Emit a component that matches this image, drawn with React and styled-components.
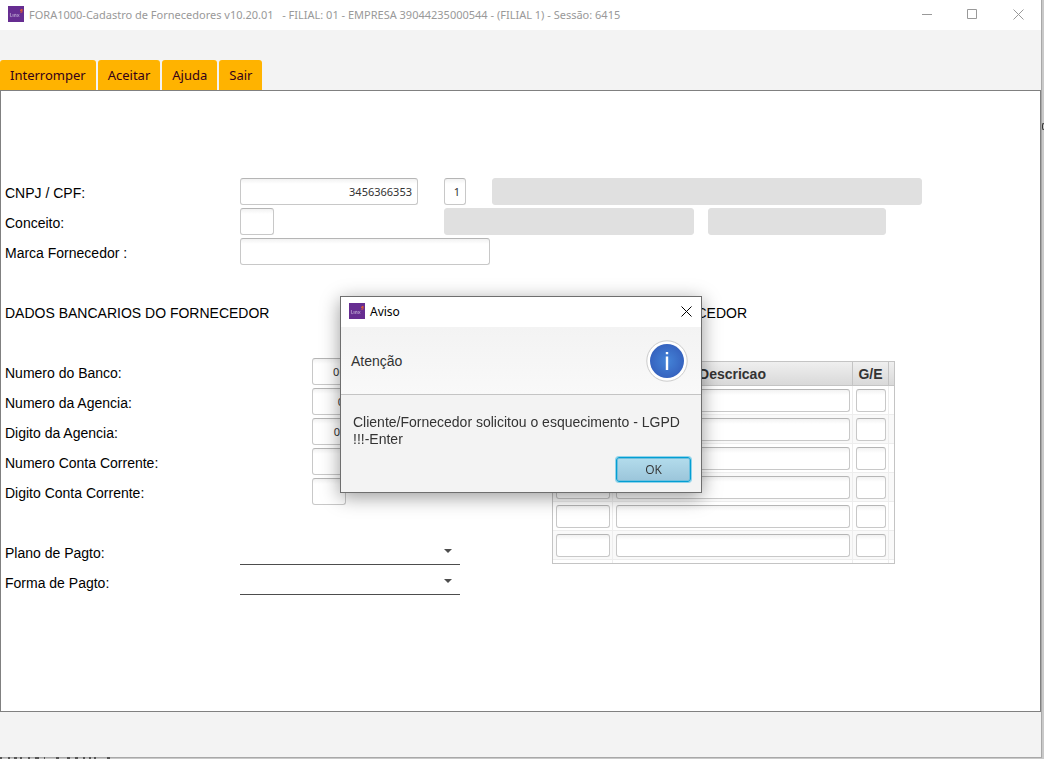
import React from 'react'
import styled, { createGlobalStyle } from 'styled-components'

const GlobalStyle = createGlobalStyle`
  * {
    box-sizing: border-box;
  }

  body {
    margin: 0;
    background: #c9c9c9;
    font-family: 'Liberation Sans', Arial, sans-serif;
    font-size: 14px;
    color: #000;
  }
`

const BUTTON_FONT = "'Open Sans', 'Segoe UI', sans-serif"
const SMALL_FONT = "'Noto Sans', 'Segoe UI', sans-serif"

const BANK_FIELDS = [
  { id: 'banco', label: 'Numero do Banco:', width: 46, value: '000' },
  { id: 'agencia', label: 'Numero da Agencia:', width: 38, value: '0' },
  { id: 'digito-agencia', label: 'Digito da Agencia:', width: 34, value: '0' },
  { id: 'conta', label: 'Numero Conta Corrente:', width: 106, value: '' },
  { id: 'digito-conta', label: 'Digito Conta Corrente:', width: 34, value: '' }
]

const PAYMENT_FIELDS = [
  { id: 'plano', label: 'Plano de Pagto:' },
  { id: 'forma', label: 'Forma de Pagto:' }
]

const CONCEPT_ROWS = [1, 2, 3, 4, 5, 6]

const LinxLogo = () => (
  <Logo viewBox="0 0 16 16" aria-hidden="true">
    <rect width="16" height="16" fill="#662d91" />
    <g fill="none" stroke="#b79fce" strokeWidth="0.8">
      <path d="M2.4 7v3.6h1.4" />
      <path d="M5 8v2.9" />
      <path d="M6.4 10.9V8.4h1.7v2.5" />
      <path d="M9.3 8.2l1.8 2.6M11.1 8.2l-1.8 2.6" />
    </g>
    <path d="M12 4.5l1.8-.9.2 1.6M13.2 4l1.2-.4M12.4 6.2l2-.4" fill="none" stroke="#f26522" />
  </Logo>
)

const App = () => (
  <Desktop>
    <GlobalStyle />
    <Window>
      <TitleBar>
        <LinxLogo />
        <Title>
          FORA1000-Cadastro de Fornecedores v10.20.01{'   '}- FILIAL: 01 - EMPRESA
          39044235000544 - (FILIAL 1) - Sessão: 6415
        </Title>
        <WindowButton aria-label="Minimizar">
          <Glyph viewBox="0 0 11 11">
            <path d="M1 5.5h10" />
          </Glyph>
        </WindowButton>
        <WindowButton aria-label="Maximizar">
          <Glyph viewBox="0 0 11 11">
            <path d="M.5 .5h9v9h-9z" />
          </Glyph>
        </WindowButton>
        <WindowButton aria-label="Fechar">
          <Glyph viewBox="0 0 11 11">
            <path d="M.5 .5l10 10M10.5 .5l-10 10" />
          </Glyph>
        </WindowButton>
      </TitleBar>

      <Toolbar>
        <ToolButton>Interromper</ToolButton>
        <ToolButton>Aceitar</ToolButton>
        <ToolButton>Ajuda</ToolButton>
        <ToolButton>Sair</ToolButton>
      </Toolbar>

      <Content>
        <Row>
          <Label htmlFor="cnpj">CNPJ / CPF:</Label>
          <Slot $width={204}>
            <Field id="cnpj" $width={178} defaultValue="3456366353" />
          </Slot>
          <Slot $width={48}>
            <Field aria-label="Sequencia" $width={22} defaultValue="1" />
          </Slot>
          <Field aria-label="Nome" $width={430} disabled />
        </Row>
        <Row>
          <Label htmlFor="conceito">Conceito:</Label>
          <Slot $width={204}>
            <Field id="conceito" $width={34} />
          </Slot>
          <Slot $width={264}>
            <Field aria-label="Descricao do conceito" $width={250} disabled />
          </Slot>
          <Field aria-label="Situacao" $width={178} disabled />
        </Row>
        <Row>
          <Label htmlFor="marca">Marca Fornecedor :</Label>
          <Field id="marca" $width={250} />
        </Row>

        <Columns>
          <Column>
            <Heading>DADOS BANCARIOS DO FORNECEDOR</Heading>
            <Group>
              {BANK_FIELDS.map(field => (
                <Row key={field.id}>
                  <Label htmlFor={field.id} $wide>
                    {field.label}
                  </Label>
                  <Field id={field.id} $width={field.width} defaultValue={field.value} />
                </Row>
              ))}
            </Group>
            {PAYMENT_FIELDS.map(field => (
              <Row key={field.id}>
                <Label htmlFor={field.id}>{field.label}</Label>
                <SelectBox>
                  <Select id={field.id} />
                  <Arrow viewBox="0 0 8 4">
                    <path d="M0 0h8l-4 4z" />
                  </Arrow>
                </SelectBox>
              </Row>
            ))}
          </Column>

          <Column>
            <Heading $end>FORNECEDOR</Heading>
            <Table>
              <colgroup>
                <col width="60" />
                <col width="240" />
                <col width="36" />
                <col width="5" />
              </colgroup>
              <thead>
                <tr>
                  <HeadCell />
                  <HeadCell>Descricao</HeadCell>
                  <HeadCell>G/E</HeadCell>
                  <HeadCell />
                </tr>
              </thead>
              <tbody>
                {CONCEPT_ROWS.map(row => (
                  <TableRow key={row}>
                    <Cell>
                      <CellInput aria-label={`Codigo ${row}`} />
                    </Cell>
                    <Cell>
                      <CellInput aria-label={`Descricao ${row}`} />
                    </Cell>
                    <Cell>
                      <CellInput aria-label={`G/E ${row}`} />
                    </Cell>
                    <Cell />
                  </TableRow>
                ))}
                <tr>
                  <EndCell />
                  <EndCell />
                  <EndCell />
                  <EndCell />
                </tr>
              </tbody>
            </Table>
          </Column>
        </Columns>
      </Content>
      <Footer />
    </Window>

    <BackEdge />
    <BackMarks viewBox="0 0 110 2" aria-hidden="true">
      <path d="M0 1h2M8 1h2M14 1h3M20 1h2M28 1h2M35 1h4M44 1h1M56 1h3M67 1h3M75 1h3M83 1h2M89 1h2M94 1h2M107 1h3" />
    </BackMarks>

    <Overlay>
      <Dialog role="dialog" aria-labelledby="aviso">
        <DialogTitleBar>
          <LinxLogo />
          <DialogTitle id="aviso">Aviso</DialogTitle>
          <CloseButton aria-label="Fechar aviso">
            <Glyph viewBox="0 0 11 11">
              <path d="M.5 .5l10 10M10.5 .5l-10 10" />
            </Glyph>
          </CloseButton>
        </DialogTitleBar>
        <DialogHeader>
          Atenção
          <InfoIcon viewBox="0 0 42 42" aria-hidden="true">
            <defs>
              <radialGradient id="info">
                <stop offset="0" stopColor="#4484d8" />
                <stop offset="1" stopColor="#3663bf" />
              </radialGradient>
            </defs>
            <circle cx="21" cy="21" r="20.2" fill="#fff" stroke="#ccc" />
            <circle cx="21" cy="21" r="17" fill="url(#info)" />
            <path d="M19.8 12h2.4v2.3h-2.4zM19.8 16.6h2.4V30h-2.4z" fill="#fff" />
          </InfoIcon>
        </DialogHeader>
        <DialogBody>
          <Message>Cliente/Fornecedor solicitou o esquecimento - LGPD !!!-Enter</Message>
          <OkButton>OK</OkButton>
        </DialogBody>
      </Dialog>
    </Overlay>
  </Desktop>
)

const Desktop = styled.div`
  position: relative;
  display: flex;
  min-height: 100vh;
  padding: 0 2px 1px 0;
  overflow: hidden;
`

const Window = styled.main`
  flex: 1;
  display: flex;
  flex-direction: column;
  background: #f3f3f3;
  border-right: 1px solid #a8a8a8;
  border-bottom: 1px solid #a8a8a8;
`

// slivers of the window that lies behind this one
const BackEdge = styled.span`
  position: absolute;
  top: 123px;
  right: 0;
  width: 2px;
  height: 7px;
  border: 1px solid #333;
  border-right: 0;
  border-radius: 2px 0 0 2px;
`

const BackMarks = styled.svg`
  position: absolute;
  left: 0;
  bottom: 0;
  width: 110px;
  height: 2px;
  fill: none;
  stroke: #555;
  stroke-width: 2;
`

const TitleBar = styled.header`
  display: flex;
  align-items: center;
  height: 30px;
  padding-left: 8px;
  background: #fff;
`

const Logo = styled.svg`
  flex: none;
  width: 16px;
  height: 16px;
  margin-bottom: 2px;
`

const Title = styled.h1`
  flex: 1;
  margin: 0 0 0 5px;
  font: 11px/16px ${SMALL_FONT};
  color: #999;
  white-space: pre-wrap;
`

const WindowButton = styled.button`
  display: flex;
  align-items: center;
  justify-content: center;
  width: 46px;
  height: 30px;
  padding: 0 0 2px;
  border: 0;
  background: none;
  color: #999;
`

const Glyph = styled.svg`
  width: 11px;
  height: 11px;
  fill: none;
  stroke: currentColor;
`

const Toolbar = styled.nav`
  display: flex;
  gap: 2px;
  padding-top: 30px;
`

const ToolButton = styled.button`
  height: 30px;
  padding: 0 10px;
  border: 0;
  border-radius: 3px 3px 0 0;
  background: #ffb300;
  font: 13px ${SMALL_FONT};
  color: #33001a;
`

const Content = styled.section`
  flex: 1;
  padding: 87px 4px 30px;
  border: 1px solid #808080;
  background: #fff;
`

const Row = styled.div`
  display: flex;
  align-items: flex-start;
  height: 30px;
`

const Label = styled.label`
  flex: none;
  width: ${props => (props.$wide ? '307px' : '235px')};
  line-height: 30px;
`

const Slot = styled.div`
  flex: none;
  width: ${props => props.$width}px;
`

const Field = styled.input`
  display: block;
  width: ${props => props.$width}px;
  height: 27px;
  padding: 0 5px;
  border: 1px solid #c8c8c8;
  border-top-color: #b5b5b5;
  border-radius: 3px;
  background: linear-gradient(#f2f2f2, #fff 5px);
  font: 11px ${SMALL_FONT};
  color: #333;
  text-align: right;

  &:disabled {
    border-color: #e0e0e0;
    background: #e0e0e0;
  }
`

const Columns = styled.div`
  display: grid;
  grid-template-columns: 547px 1fr;
  padding-top: 30px;
`

const Column = styled.div`
  min-width: 0;
`

const Group = styled.div`
  margin-bottom: 30px;
`

const Heading = styled.h2`
  width: ${props => (props.$end ? '195px' : 'auto')};
  margin: 0 0 30px;
  font-size: 14px;
  font-weight: normal;
  line-height: 30px;
  text-align: ${props => (props.$end ? 'right' : 'left')};
`

const Table = styled.table`
  width: 343px;
  margin-top: 33px;
  border: 1px solid #c4c4c4;
  border-spacing: 0;
  table-layout: fixed;
`

const HeadCell = styled.th`
  height: 24px;
  padding: 0;
  border-right: 1px solid #c4c4c4;
  border-bottom: 1px solid #c4c4c4;
  background: linear-gradient(#efefef, #d9d9d9);
  color: #333;

  &:last-child {
    border-right: 0;
  }
`

const Cell = styled.td`
  height: 29px;
  padding: 3px 2px 2px 3px;
  border-right: 1px solid #ededed;
  border-bottom: 1px solid #ededed;

  &:last-child {
    padding: 0;
    border-right: 0;
  }
`

const EndCell = styled.td`
  height: 3px;
  padding: 0;
  border-right: 1px solid #ededed;

  &:last-child {
    border-right: 0;
  }
`

const TableRow = styled.tr`
  &:nth-child(even) {
    background: #f9f9f9;
  }
`

const CellInput = styled(Field)`
  width: 100%;
  height: 23px;
`

const SelectBox = styled.div`
  display: grid;
  align-items: center;
  width: 220px;
`

const Select = styled.select`
  grid-area: 1 / 1;
  height: 27px;
  border: 0;
  border-bottom: 1px solid #4d4d4d;
  background: none;
  appearance: none;
`

const Arrow = styled.svg`
  grid-area: 1 / 1;
  justify-self: end;
  width: 8px;
  height: 4px;
  margin: 0 8px 2px 0;
  fill: #4d4d4d;
  pointer-events: none;
`

const Footer = styled.footer`
  height: 45px;
`

const Overlay = styled.div`
  position: fixed;
  inset: 0;
  display: flex;
  align-items: center;
  justify-content: center;
  padding: 30px 2px 0 0;
`

const Dialog = styled.section`
  width: 362px;
  border: 1px solid #6e6e6e;
  background: #f3f3f3;
  box-shadow: 0 4px 18px rgba(0, 0, 0, 0.4);
  color: #333;
`

const DialogTitleBar = styled(TitleBar)`
  color: #000;
`

const DialogTitle = styled(Title)`
  font-size: 12px;
  color: #000;
`

const CloseButton = styled(WindowButton)`
  width: 30px;
  color: #000;
`

const DialogHeader = styled.div`
  display: flex;
  align-items: center;
  justify-content: space-between;
  height: 68px;
  padding: 0 13px 0 10px;
  border-bottom: 1px solid #c4c4c4;
  background: linear-gradient(#f3f3f3, #f9f9f9);
`

const InfoIcon = styled.svg`
  width: 42px;
  height: 42px;
`

const DialogBody = styled.div`
  display: flex;
  flex-direction: column;
  align-items: flex-end;
  padding: 19px 10px 10px 12px;
`

const Message = styled.p`
  align-self: stretch;
  margin: 0 0 9px;
  line-height: 17px;
`

const OkButton = styled.button`
  width: 75px;
  height: 25px;
  padding: 0;
  border: 1px solid #039ed3;
  border-radius: 3px;
  background: linear-gradient(#b3dcec, #9bc5da);
  box-shadow: 0 0 0 1px #8fd3ea, inset 0 0 0 1px #6fc0de;
  font: 12px ${BUTTON_FONT};
  color: #333;
`

export default App
